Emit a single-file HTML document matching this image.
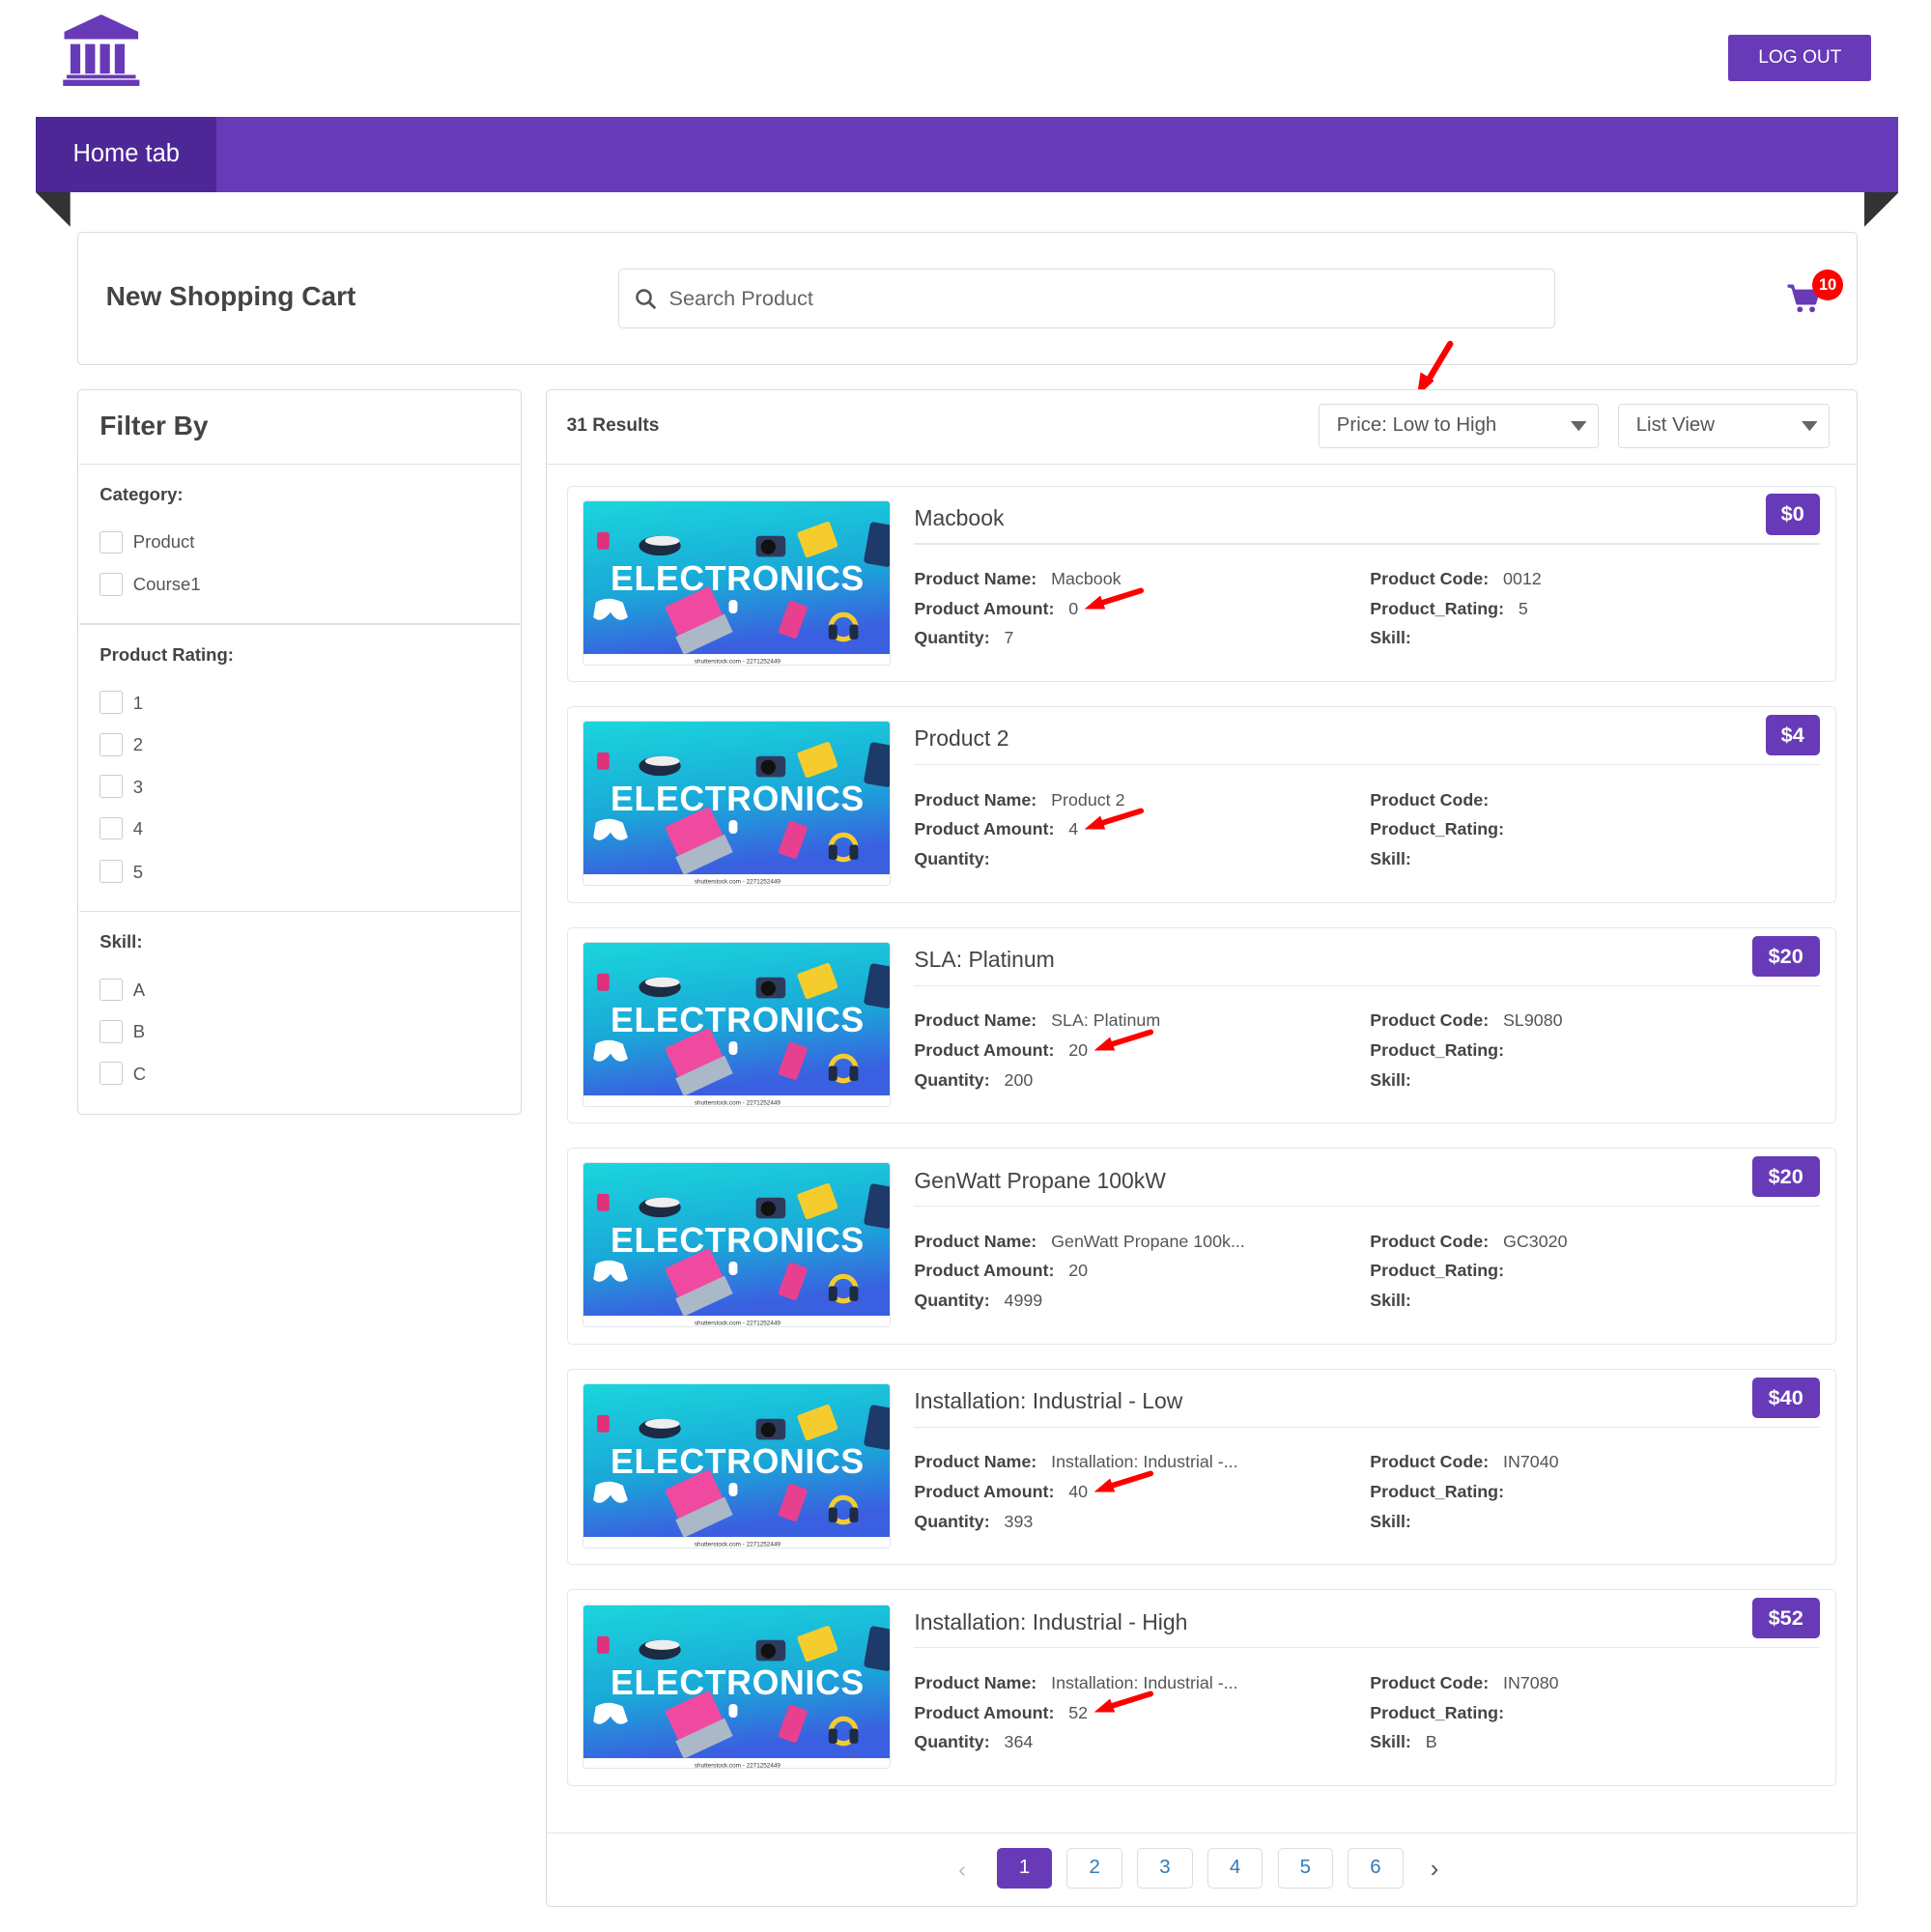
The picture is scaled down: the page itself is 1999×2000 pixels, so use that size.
<!DOCTYPE html>
<html><head><meta charset="utf-8">
<style>
html,body{margin:0;padding:0;background:#fff;}
body{width:1999px;height:1999px;overflow:hidden;font-family:"Liberation Sans",Arial,sans-serif;color:#444;}
#z{zoom:1.2754;position:relative;width:1568px;height:1568px;}
.a{position:absolute;}
.card{position:absolute;background:#fff;border:1px solid #dcdcdc;border-radius:4px;}
.lbl{font-weight:bold;color:#444;}
.row{position:absolute;font-size:14px;white-space:nowrap;color:#555;}
.cb{position:absolute;width:17px;height:17px;border:1px solid #ccc;border-radius:2px;background:#fff;}
.ft{position:absolute;font-size:14.5px;color:#555;}
.fh{position:absolute;font-size:14.5px;font-weight:bold;color:#444;}
.hr{position:absolute;height:1px;background:#e2e2e2;}
.pg{position:absolute;top:1500px;width:45px;height:33px;border:1px solid #ddd;border-radius:4px;box-sizing:border-box;text-align:center;line-height:31px;font-size:16px;color:#337ab7;background:#fff;}
.price{position:absolute;background:#673ab7;color:#fff;font-weight:bold;font-size:17px;border-radius:4px;height:33px;line-height:33px;text-align:center;}
.title{position:absolute;font-size:18px;color:#444;}
</style></head><body><div id="z">

<svg class="a" style="left:50px;top:12px" width="64" height="58" viewBox="0 0 64 58">
<path d="M32 0 L62 14 V20 H2 V14 Z" fill="#673ab7"/>
<rect x="7" y="24" width="8" height="24" fill="#673ab7"/>
<rect x="19" y="24" width="8" height="24" fill="#673ab7"/>
<rect x="31" y="24" width="8" height="24" fill="#673ab7"/>
<rect x="43" y="24" width="8" height="24" fill="#673ab7"/>
<rect x="4" y="49" width="56" height="3" fill="#673ab7"/>
<rect x="1" y="53" width="62" height="5" fill="#673ab7"/>
</svg>

<div class="a" style="left:1403px;top:28px;width:116px;height:38px;background:#673ab7;color:#fff;font-size:15px;line-height:38px;text-align:center;border-radius:2px;">LOG OUT</div>

<div class="a" style="left:29px;top:95px;width:1512px;height:61px;background:#673ab7;"></div>
<div class="a" style="left:29px;top:95px;width:147px;height:61px;background:#4d2796;color:#fff;font-size:20px;line-height:61px;text-align:center;">Home tab</div>
<svg class="a" style="left:29px;top:156px" width="28" height="28"><path d="M0 0H28V28Z" fill="#333"/></svg>
<svg class="a" style="left:1513px;top:156px" width="28" height="28"><path d="M28 0H0V28Z" fill="#333"/></svg>

<div class="card" style="left:63px;top:188px;width:1443px;height:107px;"></div>
<div class="a" style="left:86px;top:228px;font-size:22px;font-weight:bold;color:#444;">New Shopping Cart</div>
<div class="a" style="left:502px;top:218px;width:759px;height:47px;border:1px solid #ddd;border-radius:4px;"></div>
<svg class="a" style="left:515px;top:234px" width="18" height="18" viewBox="0 0 18 18"><circle cx="7.5" cy="7.5" r="5.5" fill="none" stroke="#555" stroke-width="2"/><path d="M11.5 11.5L16 16" stroke="#555" stroke-width="2.2" stroke-linecap="round"/></svg>
<div class="a" style="left:543px;top:232px;font-size:17px;color:#666;">Search Product</div>
<svg class="a" style="left:1449px;top:228px" width="30" height="28" viewBox="0 0 30 28"><path d="M2 4H6L10 18H24L27 8H8" fill="#673ab7" stroke="#673ab7" stroke-width="2.5" stroke-linejoin="round"/><circle cx="12" cy="23" r="2.3" fill="#673ab7"/><circle cx="22" cy="23" r="2.3" fill="#673ab7"/></svg>
<div class="a" style="left:1471px;top:219px;width:25px;height:25px;border-radius:50%;background:#f00;color:#fff;font-size:13px;font-weight:bold;text-align:center;line-height:25px;">10</div>

<svg class="a" style="left:1140px;top:272px" width="45" height="55" viewBox="0 0 45 55"><path d="M37 7 L19 37" stroke="#f00" stroke-width="5" stroke-linecap="round"/><path d="M10 50 L13 30 L24 37Z" fill="#f00"/></svg>

<div class="card" style="left:63px;top:316px;width:359px;height:587px;"></div>
<div class="a" style="left:81px;top:333px;font-size:22px;font-weight:bold;color:#444;">Filter By</div>
<div class="hr" style="left:64px;top:376px;width:358px;"></div>
<div class="fh" style="left:81px;top:393px;">Category:</div>
<div class="cb" style="left:81px;top:431px;"></div><div class="ft" style="left:108px;top:431px;">Product</div>
<div class="cb" style="left:81px;top:465px;"></div><div class="ft" style="left:108px;top:466px;">Course1</div>
<div class="hr" style="left:64px;top:506px;width:358px;"></div>
<div class="fh" style="left:81px;top:523px;">Product Rating:</div>
<div class="cb" style="left:81px;top:561px;"></div><div class="ft" style="left:108px;top:562px;">1</div>
<div class="cb" style="left:81px;top:595px;"></div><div class="ft" style="left:108px;top:596px;">2</div>
<div class="cb" style="left:81px;top:629px;"></div><div class="ft" style="left:108px;top:630px;">3</div>
<div class="cb" style="left:81px;top:663px;"></div><div class="ft" style="left:108px;top:664px;">4</div>
<div class="cb" style="left:81px;top:698px;"></div><div class="ft" style="left:108px;top:699px;">5</div>
<div class="hr" style="left:64px;top:739px;width:358px;"></div>
<div class="fh" style="left:81px;top:756px;">Skill:</div>
<div class="cb" style="left:81px;top:794px;"></div><div class="ft" style="left:108px;top:795px;">A</div>
<div class="cb" style="left:81px;top:828px;"></div><div class="ft" style="left:108px;top:829px;">B</div>
<div class="cb" style="left:81px;top:862px;"></div><div class="ft" style="left:108px;top:863px;">C</div>

<div class="card" style="left:443px;top:316px;width:1063px;height:1230px;"></div>
<div class="a" style="left:460px;top:337px;font-size:15px;font-weight:bold;color:#444;">31 Results</div>
<div class="a" style="left:1070px;top:328px;width:228px;height:36px;border:1px solid #ddd;border-radius:3px;box-sizing:border-box;"></div>
<div class="a" style="left:1085px;top:336px;font-size:16px;color:#555;">Price: Low to High</div>
<svg class="a" style="left:1275px;top:342px" width="13" height="9"><path d="M0 0H13L6.5 8Z" fill="#666"/></svg>
<div class="a" style="left:1313px;top:328px;width:172px;height:36px;border:1px solid #ddd;border-radius:3px;box-sizing:border-box;"></div>
<div class="a" style="left:1328px;top:336px;font-size:16px;color:#555;">List View</div>
<svg class="a" style="left:1462px;top:342px" width="13" height="9"><path d="M0 0H13L6.5 8Z" fill="#666"/></svg>
<div class="hr" style="left:444px;top:376px;width:1062px;"></div>

<div id="prods"></div>

<div class="hr" style="left:444px;top:1487px;width:1062px;"></div>
<div class="a" style="left:778px;top:1507px;font-size:18px;color:#bbb;">‹</div>
<div class="pg" style="left:809px;background:#673ab7;color:#fff;border-color:#673ab7;">1</div>
<div class="pg" style="left:866px;">2</div>
<div class="pg" style="left:923px;">3</div>
<div class="pg" style="left:980px;">4</div>
<div class="pg" style="left:1037px;">5</div>
<div class="pg" style="left:1094px;">6</div>
<div class="a" style="left:1161px;top:1506px;font-size:20px;color:#555;">›</div>

<script>
var P=[
["Macbook","$0","Macbook","0","7","0012","5","",44],
["Product 2","$4","Product 2","4","","","","",44],
["SLA: Platinum","$20","SLA: Platinum","20","200","SL9080","","",55],
["GenWatt Propane 100kW","$20","GenWatt Propane 100k...","20","4999","GC3020","","",55],
["Installation: Industrial - Low","$40","Installation: Industrial -...","40","393","IN7040","","",55],
["Installation: Industrial - High","$52","Installation: Industrial -...","52","364","IN7080","","B",55]];
var arrows=[1,1,1,0,1,1];
var img='<svg width="250" height="134" viewBox="0 0 250 134" style="position:absolute;left:0;top:0"><defs><linearGradient id="gX" x1="0" y1="0" x2="0.25" y2="1"><stop offset="0" stop-color="#1ad6dc"/><stop offset="0.6" stop-color="#1aa8d8"/><stop offset="1" stop-color="#3a5fe0"/></linearGradient></defs><rect width="250" height="124" fill="url(#gX)"/><rect y="124" width="250" height="10" fill="#fff"/><text x="125" y="131.5" font-size="5" text-anchor="middle" fill="#333" font-family="Liberation Sans">shutterstock.com - 2271252449</text><rect x="11" y="25" width="10" height="14" rx="2" fill="#e0307a"/><ellipse cx="62" cy="36" rx="17" ry="8" fill="#1d2b44"/><ellipse cx="64" cy="32" rx="14" ry="4" fill="#eee"/><rect x="140" y="28" width="24" height="17" rx="3" fill="#2d3c5c"/><circle cx="150" cy="37" r="6" fill="#111"/><rect x="176" y="20" width="28" height="22" rx="2" fill="#f5cc2e" transform="rotate(-20 190 31)"/><rect x="230" y="18" width="22" height="34" rx="3" fill="#1e3a6a" transform="rotate(10 241 35)"/><text x="125" y="72" font-size="28" font-weight="bold" text-anchor="middle" fill="#fff" font-family="Liberation Sans" letter-spacing="0.5">ELECTRONICS</text><path d="M10 82 Q20 76 32 82 L36 94 Q28 100 22 90 Q14 100 8 94Z" fill="#fff"/><rect x="70" y="76" width="40" height="30" rx="2" fill="#f04aa0" transform="rotate(-25 90 90)"/><rect x="76" y="100" width="44" height="16" fill="#aab8c8" transform="rotate(-25 98 108)"/><rect x="118" y="80" width="7" height="11" rx="3" fill="#fff"/><rect x="162" y="82" width="16" height="28" rx="2" fill="#e84090" transform="rotate(20 170 96)"/><circle cx="211" cy="102" r="10" fill="none" stroke="#f5cc2e" stroke-width="4"/><rect x="199" y="100" width="7" height="12" rx="2" fill="#1d2b44"/><rect x="216" y="100" width="7" height="12" rx="2" fill="#1d2b44"/></svg>';
var h='';
for(var i=0;i<6;i++){var p=P[i];var t=394+i*179.2;
h+='<div class="card" style="left:460px;top:'+t+'px;width:1029px;height:158px;border-color:#e4e6ea;"></div>';
h+='<div class="a" style="left:473px;top:'+(t+12)+'px;width:250px;height:134px;border:1px solid #e3e6ea;border-radius:3px;overflow:hidden;box-sizing:border-box;">'+img+'</div>';
h+='<div class="title" style="left:742px;top:'+(t+16)+'px;">'+p[0]+'</div>';
h+='<div class="hr" style="left:742px;top:'+(t+47)+'px;width:735px;background:#e5e8ee;"></div>';
h+='<div class="price" style="left:'+(1477-p[8])+'px;top:'+(t+7)+'px;width:'+p[8]+'px;">'+p[1]+'</div>';
var r=[t+68,t+92,t+116];
h+='<div class="row" style="left:742px;top:'+r[0]+'px;"><span class="lbl">Product Name:</span>&nbsp;&nbsp; '+p[2]+'</div>';
h+='<div class="row" style="left:742px;top:'+r[1]+'px;"><span class="lbl">Product Amount:</span>&nbsp;&nbsp; '+p[3]+'</div>';
h+='<div class="row" style="left:742px;top:'+r[2]+'px;"><span class="lbl">Quantity:</span>&nbsp;&nbsp; '+p[4]+'</div>';
h+='<div class="row" style="left:1112px;top:'+r[0]+'px;"><span class="lbl">Product Code:</span>&nbsp;&nbsp; '+p[5]+'</div>';
h+='<div class="row" style="left:1112px;top:'+r[1]+'px;"><span class="lbl">Product_Rating:</span>&nbsp;&nbsp; '+p[6]+'</div>';
h+='<div class="row" style="left:1112px;top:'+r[2]+'px;"><span class="lbl">Skill:</span>&nbsp;&nbsp; '+p[7]+'</div>';
if(arrows[i]){var ax=(p[3].length>1?886:878);
h+='<svg class="a" style="left:'+ax+'px;top:'+(t+80)+'px" width="52" height="22" viewBox="0 0 52 22"><path d="M48 5 L16 15" stroke="#f00" stroke-width="4.5" stroke-linecap="round"/><path d="M2 20 L15 9 L19 20Z" fill="#f00"/></svg>';}
}
document.getElementById('prods').outerHTML=h;
</script>
</div></body></html>
